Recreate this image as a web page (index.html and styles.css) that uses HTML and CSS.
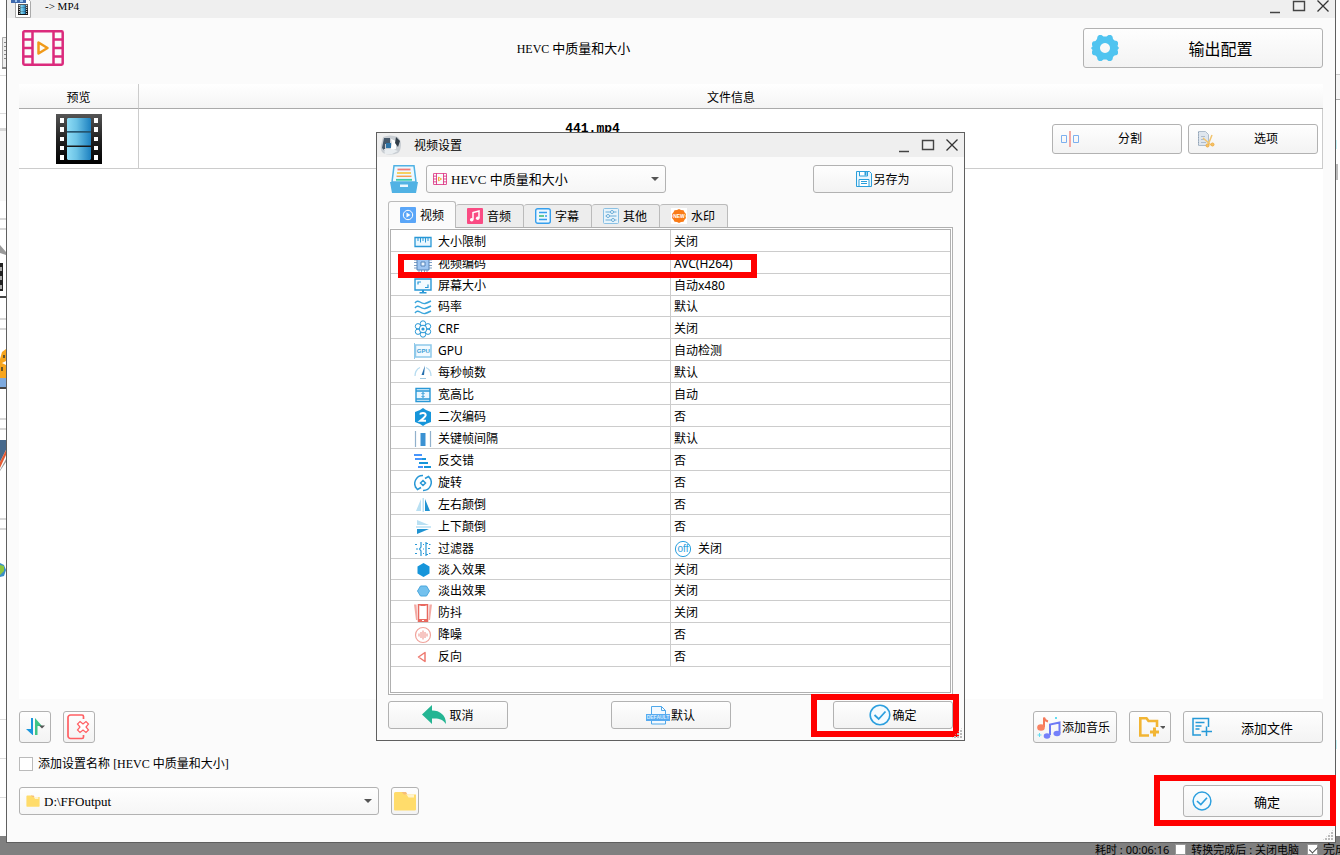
FILE: index.html
```html
<!DOCTYPE html>
<html lang="zh-CN">
<head>
<meta charset="utf-8">
<title>MP4</title>
<link rel="stylesheet" href="styles.css">
</head>
<body>
<svg class="sprite" aria-hidden="true">
  <defs>
    <linearGradient id="gFilm" x1="0" y1="0" x2="0" y2="1"><stop offset="0" stop-color="#555"/><stop offset=".5" stop-color="#222"/><stop offset="1" stop-color="#000"/></linearGradient>
    <linearGradient id="gFrame" x1="0" y1="0" x2="1" y2="0"><stop offset="0" stop-color="#8fdcf5"/><stop offset=".4" stop-color="#6cc3e6"/><stop offset="1" stop-color="#1c80c0"/></linearGradient>
  </defs>
  <symbol id="film" viewBox="0 0 46 50">
    <path fill="url(#gFilm)" d="M0 0h46v50H0z"/>
    <path fill="#fff" d="M4 4h4v5H4zM4 13h4v5H4zM4 23h4v4H4zM4 32h4v4H4zM4 41h4v5H4zM38 4h4v5h-4zM38 13h4v5h-4zM38 23h4v4h-4zM38 32h4v4h-4zM38 41h4v5h-4z"/>
    <path fill="url(#gFrame)" d="M12 4h22l1 1v12H11V5zM11 18.500h24v13H11zM11 33h24v12l-1 1H12l-1-1z"/>
    <path fill="#1d6f9d" opacity=".6" d="M11 17h24v1.500H11z"/>
  </symbol>
  <symbol id="reel" viewBox="0 0 42 36">
    <path fill="none" stroke="#db2a7c" stroke-width="2.500" d="M2.500 1.250h37a1.200 1.200 0 0 1 1.200 1.200v31a1.200 1.200 0 0 1-1.200 1.200h-37a1.200 1.200 0 0 1-1.200-1.200v-31a1.200 1.200 0 0 1 1.200-1.200zM10.500 1v34M31.500 1v34M1 9.500h9.500M1 18h9.500M1 26.500h9.500M31.500 9.500H41M31.500 18H41M31.500 26.500H41"/>
    <path fill="none" stroke="#f09a1a" stroke-width="2.500" stroke-linejoin="round" d="M16.500 12.500v11l9-5.500z"/>
  </symbol>
  <symbol id="gear" viewBox="0 0 28 28">
    <path fill="#50c4f0" fill-rule="evenodd" d="M8 1h2.500l2 1.500h3l2-1.500H20l1.500 1.500.5 2.500 1.500 1.500 2.500.5 1 1.500v2l-.5 1.500L28 14l-1.500 2 .5 1.500v2l-1 1.500-2.500.5L22 23l-.5 2.500L20 27h-2.500l-2-1.500h-3l-2 1.500H8l-1.500-1.500L6 23l-1.500-1.500L2 21l-1-1.500v-2l.5-1.500L0 14l1.500-1.500L1 11V9l1-1.500L4.500 7 6 5l.5-2.500zM14 9a5 5 0 1 0 .01 0z"/>
  </symbol>
  <symbol id="split" viewBox="0 0 18 18"><path fill="none" stroke="#7cb0ef" d="M.5 5.500h5v7h-5zM12.500 5.500h5v7h-5z"/><path fill="#f4a9a4" d="M8 1h2v16H8z"/></symbol>
  <symbol id="cut" viewBox="0 0 18 18"><path fill="#dfe6ee" stroke="#aebccb" d="M1.500 1.500h7l3 3v11h-10z"/><path stroke="#8fa0b3" stroke-dasharray="1 1.500" d="M1.500 2v13"/><path stroke="#afbccb" d="M4 6.500h4M4 9.500h3M4 12.500h5"/><path fill="none" stroke="#f2c46d" stroke-width="1.500" d="M6 8l8 7M15 5l-4 10"/><circle cx="10.500" cy="15.500" r="1.500" fill="#f7c264" stroke="#efae45"/><circle cx="15.500" cy="14.500" r="1.500" fill="#f7c264" stroke="#efae45"/></symbol>
  <symbol id="sort" viewBox="0 0 20 20"><path fill="#1c97dd" d="M6 1h2v17h-.5L1 12h5z"/><path fill="#3fc487" d="M10 1l7 8h-4.500v9H10z"/><path fill="#555" d="M14 8.500h6L17 11.500z"/></symbol>
  <symbol id="clear" viewBox="0 0 24 26"><path fill="none" stroke="#ff5f63" stroke-width="1.700" d="M16.500 5V2.500a1.500 1.500 0 0 0-1.500-1.500H3.500A2.500 2.500 0 0 0 1 3.500V22a2.500 2.500 0 0 0 2.500 2.500H15a1.500 1.500 0 0 0 1.500-1.500v-2"/><path fill="#fff" stroke="#ff5f63" stroke-width="1.200" d="M13 7.500l3 2.500 3-2.500 2.500 2.500-2.500 3 2.500 3-2.500 2.500-3-2.500-3 2.500-2.500-2.500 2.500-3-2.500-3z"/></symbol>
  <symbol id="folder" viewBox="0 0 22 20"><path fill="#ffdc6b" d="M0 2.500Q0 1 1.500 1H9l3 2.500h10V18.500q0 1-1 1H1q-1 0-1-1z"/><path fill="#f7bd78" d="M7.500 1H12l1.500 2.500H10z"/><path fill="#fff3cc" d="M12.500 3.500H20v3h-5.500z"/></symbol>
  <symbol id="music" viewBox="0 0 24 24"><path fill="none" stroke="#f4795a" stroke-width="2" d="M7 12V2.500q.5 3 4 4"/><ellipse cx="4" cy="12.500" rx="3.800" ry="3.200" fill="#f98262"/><path fill="none" stroke="#6d7af5" stroke-width="2" d="M13 20V9.500l9.500-2V18"/><ellipse cx="10" cy="21" rx="3.300" ry="2.800" fill="#7580fa"/><ellipse cx="20" cy="18.500" rx="3.500" ry="2.800" fill="#7580fa"/><path fill="#63dcf1" d="M2 18h1v1.500h1.500v1H3V22H2v-1.500H.5v-1H2zM18 2h2v2h-2z"/></symbol>
  <symbol id="folderadd" viewBox="0 0 26 22"><path fill="none" stroke="#f2b534" stroke-width="2.600" d="M10 19.500H1.300V2.300H7.500l2 2.700H18v6"/><path stroke="#f2b534" stroke-width="3" d="M11 16h9M15.500 11.500v9"/><path fill="#555" d="M21 10h6l-3 3z"/></symbol>
  <symbol id="fileadd" viewBox="0 0 20 20"><path fill="none" stroke="#2599d7" stroke-width="1.500" d="M9 18H1V1.500h15.500V10M14.500 9.500V19M9.500 14.500H20M3.500 5.500h9M3.500 9h6M3.500 12h4"/></symbol>
  <symbol id="ok" viewBox="0 0 22 22"><circle cx="11" cy="11" r="9.800" fill="#f4fbff" stroke="#2c9fde" stroke-width="1.600"/><path fill="none" stroke="#2c9fde" stroke-width="1.800" d="M5.500 11l4.200 4 6.800-7.500"/></symbol>
  <symbol id="undo" viewBox="0 0 26 20"><path fill="#24b593" d="M10 0v5.500c8 0 14 4.500 14 13.500-3-4.500-7-6-14-5.500V19L0 9.500z"/></symbol>
  <symbol id="default" viewBox="0 0 24 20"><path fill="#f2f9ff" stroke="#4fa8ea" d="M5.500 19V1.500h10l4 4V19zM15.500 1.500v4h4"/><path fill="#57aaf0" d="M0 9h24v7H0z"/><text x="12" y="14" text-anchor="middle" class="ico-default" fill="#d8edff">DEFAULT</text></symbol>
  <symbol id="save" viewBox="0 0 16 16"><path fill="#eaf7ff" stroke="#2b9fdb" d="M.5.5h13l2 2v13H.5z"/><path fill="#fff" stroke="#2b9fdb" d="M3.500.5h8v4.500h-8zM3 8.500h10v7H3z"/><path fill="#2b9fdb" d="M8.500 1h2v3.500h-2zM5 10h6v1H5zM5 12h6v1H5z"/></symbol>
  <symbol id="drawer" viewBox="0 0 28 28"><path fill="#edf9ff" stroke="#51b2e4" stroke-width="1.500" d="M4 .8h20L26 17H2z"/><path stroke="#f27c77" stroke-width="1.800" d="M7.500 4.500h13"/><path stroke="#f8c94f" stroke-width="1.800" d="M7 8h14"/><path stroke="#fa9c52" stroke-width="1.500" d="M6.500 11.300h15"/><path stroke="#3ccca8" stroke-width="1.800" d="M6 14.800h16"/><path fill="#51b2e4" d="M0 17h28l-2 11H2z"/><path fill="#e9f7ff" d="M10 19.500h8v2.500h-8z"/></symbol>
  <symbol id="appicon" viewBox="0 0 22 20"><path fill="#c9ced3" d="M3 2q7-3 15 0 3 3 3 8t-3 8q-8 3-15 0-3-3-2-8z"/><path fill="#46596b" d="M4 3h6v6H5v7l-3-3z"/><path fill="#2d74a7" d="M6 8h5v5H6z"/><path fill="#fff" d="M11 4l5 2v8l-6 2 2-7z"/><path fill="#333f4a" d="M16 2l4 4-2 6-3-4z"/><path fill="#e9edf0" d="M4 14h8l6 2-6 3H5z"/></symbol>
  <symbol id="mp4icon" viewBox="0 0 22 24"><path fill="#fff" stroke="#aaa" d="M5.500 4.500h12l3 3v16h-15z"/><path fill="#3e69ad" d="M1 1h15v8H1z"/><path fill="#98c1ed" d="M5 3h2v5H5zM10 3h3v5h-3z"/></symbol>

  <symbol id="t-video" viewBox="0 0 16 16"><path fill="#5aa6f8" d="M0 1a1 1 0 0 1 1-1h14a1 1 0 0 1 1 1v14a1 1 0 0 1-1 1H1a1 1 0 0 1-1-1z"/><circle cx="8" cy="8" r="4.700" fill="none" stroke="#fff"/><path fill="#fff" d="M6.500 5.500v5l4-2.500z"/></symbol>
  <symbol id="t-audio" viewBox="0 0 16 16"><rect width="16" height="16" rx="1" fill="#fa4b83"/><path fill="none" stroke="#fff" stroke-width="1.500" d="M6 11.500V4.500l6-1.500v7"/><circle cx="4.700" cy="11.700" r="1.800" fill="#fff"/><circle cx="10.700" cy="10.300" r="1.800" fill="#fff"/></symbol>
  <symbol id="t-sub" viewBox="0 0 16 16"><rect x=".7" y=".7" width="14.600" height="14.600" rx="2" fill="#eef8ff" stroke="#369fed" stroke-width="1.400"/><path stroke="#369fed" stroke-width="1.300" d="M4 4.500h8M4 11.500h8"/><path stroke="#47c384" stroke-width="1.700" d="M4 8h5"/><path stroke="#369fed" stroke-width="1.300" d="M10 8h2"/></symbol>
  <symbol id="t-other" viewBox="0 0 16 16"><rect x=".5" y=".5" width="15" height="15" rx="1" fill="#e8f4fb" stroke="#8bc1e4"/><path stroke="#68acd8" d="M2.500 4h11M2.500 8h11M2.500 12h11"/><circle cx="9" cy="4" r="1.500" fill="#fff" stroke="#68acd8"/><circle cx="5" cy="8" r="1.500" fill="#fff" stroke="#68acd8"/><circle cx="10" cy="12" r="1.500" fill="#fff" stroke="#68acd8"/></symbol>
  <symbol id="t-mark" viewBox="0 0 16 16"><path fill="#fff" d="M0 0h16v16H0z"/><path fill="#fa7b17" d="M8 1l2 1 2.500.3 1 2 1.500 1.700-.5 2 .5 2-1.500 1.700-1 2-2.500.3-2 1-2-1-2.500-.3-1-2L1 10l.5-2L1 6l1.500-1.700 1-2L6 2z"/><text x="8" y="9.500" text-anchor="middle" class="ico-new" fill="#fff">NEW</text></symbol>

  <symbol id="r-ruler" viewBox="0 0 18 18"><path fill="#e9f7ff" stroke="#2998d6" stroke-width="1.300" d="M1 4.500h16v9H1z"/><path stroke="#2998d6" d="M4 5v3M6.500 5v4.500M9 5v3M11.500 5v4.500M14 5v3"/></symbol>
  <symbol id="r-chip" viewBox="0 0 18 18"><path stroke="#7f9fc4" d="M5 0v18M7.500 0v18M10.500 0v18M13 0v18M0 5h18M0 7.500h18M0 10.500h18M0 13h18"/><path fill="#9fc6f2" stroke="#5684b8" d="M3 3h12v12H3z"/><path fill="#e9f4ff" stroke="#5684b8" d="M7 7h4v4H7z"/></symbol>
  <symbol id="r-screen" viewBox="0 0 18 18"><path fill="#f4fbff" stroke="#2998d6" stroke-width="1.400" d="M1 2h16v11H1z"/><path fill="none" stroke="#2998d6" stroke-width="1.200" d="M4 7.500V5h3M14 7.500v3h-3"/><path fill="#2998d6" d="M8 13h2v2h2.500v1.500h-7V15H8z"/></symbol>
  <symbol id="r-wave" viewBox="0 0 18 18"><path fill="none" stroke="#3ba6dc" stroke-width="1.400" d="M1 5q2-3 5-1t5 1.500T17 3M1 10q2-3 5-1t5 1.500T17 8M1 15q2-3 5-1t5 1.500T17 13"/></symbol>
  <symbol id="r-atom" viewBox="0 0 18 18"><g fill="none" stroke="#2998d6"><circle cx="9" cy="3.500" r="2.700"/><circle cx="9" cy="14.500" r="2.700"/><circle cx="4" cy="6.300" r="2.700"/><circle cx="14" cy="6.300" r="2.700"/><circle cx="4" cy="11.700" r="2.700"/><circle cx="14" cy="11.700" r="2.700"/><circle cx="9" cy="9" r="3.800" fill="#fff"/></g><circle cx="9" cy="9" r="1.600" fill="#2998d6"/></symbol>
  <symbol id="r-gpu" viewBox="0 0 18 18"><path stroke="#8fc9ea" d="M.5 1v16"/><path fill="#f2faff" stroke="#8fc9ea" stroke-width="1.500" d="M1.500 3h15.500v12H1.500z"/><text x="9.300" y="11" text-anchor="middle" class="ico-gpu" fill="#3a9dd5">GPU</text></symbol>
  <symbol id="r-fps" viewBox="0 0 18 18"><path fill="none" stroke="#b7dcf0" stroke-width="1.300" d="M1 12q0-6 5-8.500M12 3.500q5 2 5 8.500"/><path fill="#256fae" d="M11 1.500l-1 9.500H7.500z"/><path stroke="#9fc8e1" d="M6 14.500h6"/></symbol>
  <symbol id="r-ratio" viewBox="0 0 18 18"><path fill="#eaf7ff" stroke="#2998d6" stroke-width="1.400" d="M2 2.500h14v13H2zM2 5h14M2 13h14"/><path stroke="#2998d6" d="M9 6.500v5M7.500 8L9 6.500 10.500 8M7.500 10L9 11.500l1.500-1.500" fill="none"/></symbol>
  <symbol id="r-two" viewBox="0 0 18 18"><path fill="#1695da" d="M9 0l3 2 5 2v10l-5 2-3 2-3-2-5-2V4l5-2z"/><path fill="none" stroke="#fff" stroke-width="2" d="M6 6.500Q6.500 5 9 5t2.700 2Q11.700 8.500 6.300 12.800H12"/></symbol>
  <symbol id="r-key" viewBox="0 0 18 18"><path fill="#3b91d2" d="M6.500 3h5v13h-5z"/><path stroke="#91b1cc" stroke-width="1.200" d="M1.500 1v16M16.500 1v16"/></symbol>
  <symbol id="r-inter" viewBox="0 0 18 18"><path fill="#4795fc" d="M0 2h8v2H0zM1 6h7v2H1zM4 14h5v2H4z"/><path fill="#1695da" d="M8 6h4v2H8zM5 10h9v2H5zM10 14h7v2h-7z"/></symbol>
  <symbol id="r-rot" viewBox="0 0 18 18"><path fill="none" stroke="#2998d6" stroke-width="1.500" d="M3 15A8 8 0 0 1 9 1.500M15 3a8 8 0 0 1-6 13.500M1 12.500l2.500 3 3.500-2M17 5.500l-2.500-3-3.500 2"/><path fill="none" stroke="#2998d6" stroke-width="1.500" d="M9 6.500L11.500 9 9 11.500 6.500 9z"/></symbol>
  <symbol id="r-fliph" viewBox="0 0 18 18"><path fill="#b9e0f3" d="M7 3v12H2zM8.500 2h1.500v14H8.500z"/><path fill="#1f93d2" d="M11 3v12h5z"/></symbol>
  <symbol id="r-flipv" viewBox="0 0 18 18"><path fill="#b9e0f3" d="M3 2v5h12zM2 8.300h15v1.400H2z"/><path fill="#1f93d2" d="M3 16v-5h12z"/></symbol>
  <symbol id="r-filter" viewBox="0 0 18 18"><path fill="none" stroke="#2998d6" stroke-width="1.200" d="M7 2v5L5.500 9 7 11v5M12 2v14M12 3.500h2M12 14.500h2"/><path fill="#2998d6" d="M1 4h2v1H1zM2 8.500h2v1H2zM1 13h2v1H1zM9 4h1v1H9zM9 8.500h1v1H9zM9 13h1v1H9zM14 8h2v1h-2zM15 4h1.500v1H15zM15 13h1.500v1H15z"/></symbol>
  <symbol id="r-in" viewBox="0 0 18 18"><path fill="#1695da" d="M9.500 2l6 3.500v7l-6 3.500-6-3.500v-7z"/></symbol>
  <symbol id="r-out" viewBox="0 0 18 18"><path fill="#73c1ee" stroke="#4ba7dc" d="M6.500 4h6l3 5-3 5h-6l-3-5z"/></symbol>
  <symbol id="r-shake" viewBox="0 0 18 18"><path fill="#fff" stroke="#e8695f" stroke-width="1.500" d="M4.500.8h9v16.500h-9z"/><path fill="#e8695f" d="M4 15h10v3H4zM6.500 0h5v2h-5z"/><path fill="#f3a9a3" d="M0 .5h2.500L3.500 16H2zM18 .5h-2.500l-1 15.500H16z"/><path fill="#fff" d="M8 16h2v1H8z"/></symbol>
  <symbol id="r-noise" viewBox="0 0 18 18"><circle cx="9" cy="9" r="7.500" fill="#fff" stroke="#f0a39b" stroke-width="1.200"/><path stroke="#ee8c84" d="M5 7.500v3M7 6v6M9 4.500v9M11 6v6M13 7.500v3"/></symbol>
  <symbol id="r-rev" viewBox="0 0 18 18"><path fill="#fff" stroke="#ee7a70" stroke-width="1.500" stroke-linejoin="round" d="M11 4.500v9L4.500 9z"/></symbol>
  <symbol id="r-off" viewBox="0 0 18 18"><circle cx="9" cy="9" r="7.600" fill="#fff" stroke="#2ba0de"/><text x="9" y="12" text-anchor="middle" class="ico-off" fill="#2ba0de">off</text></symbol>
  <symbol id="w-min" viewBox="0 0 24 24"><path stroke="#444" stroke-width="1.500" d="M7 18.500h10"/></symbol>
  <symbol id="w-max" viewBox="0 0 24 24"><path fill="none" stroke="#444" stroke-width="1.400" d="M6.500 7.500h11v9h-11z"/></symbol>
  <symbol id="w-close" viewBox="0 0 24 24"><path stroke="#333" stroke-width="1.300" d="M6.500 6.500l11 11M17.500 6.500l-11 11"/></symbol>
</svg>

<div class="backdrop">
  <div class="backdrop-body">
    <svg class="edge" viewBox="0 0 6 836" preserveAspectRatio="xMinYMin slice" aria-hidden="true">
      <path fill="#f7f7f7" d="M0 131h6v70H0z"/>
      <path fill="#ddd" d="M0 75h6v1H0zM0 113h6v1H0zM0 719h6v1H0zM0 758h6v1H0zM0 797h6v1H0z"/>
      <path fill="#d8d8d8" d="M0 128h6v3H0zM0 218h6v2H0zM0 228h6v2H0zM0 318h6v2H0zM0 328h6v2H0zM0 418h6v2H0zM0 428h6v2H0zM0 518h6v2H0zM0 528h6v2H0z"/>
      <path fill="#eee" stroke="#aaa" d="M2.500 37.500H7v30H2.500z"/><path fill="#888" d="M2 67h4v2H2zM4 42h2v1H4zM4 46h2v1H4zM4 50h2v1H4zM4 54h2v1H4zM4 58h2v1H4z"/>
      <path fill="#999" d="M0 245l6 7v3l-6-2z"/>
      <path fill="#222" d="M0 263h3v28H0z"/><path fill="#aaa" d="M0 267h2v4H0zM0 276h2v4H0zM0 285h2v4H0z"/>
      <path fill="#444" d="M0 296h6v2H0zM0 387h6v2H0z"/>
      <path fill="#f7a51d" d="M2 352l4-3v12l-6 3v-5zM0 362l6 3v13H0z"/><path fill="#6b5526" d="M3 355h2v3H3zM1 367h2v4H1z"/>
      <path fill="#7da9dd" d="M0 378h6v9H0z"/>
      <path fill="#47698c" d="M0 440h6v10l-6 12z"/><path fill="#e45a33" d="M0 462l6-12v5l-6 13z"/><path fill="#999" d="M0 470l6-11v3l-6 9z"/>
      <path fill="#3a8fc6" d="M0 563l4 2 2 5-2 6-4 1z"/><path fill="#8cc63f" d="M0 565l4 1v5l-4 4z"/>
    </svg>
    <svg class="edge edge-right" viewBox="0 0 6 836" preserveAspectRatio="xMinYMin slice" aria-hidden="true">
      <path fill="#f6f6f6" d="M0 75h6v24H0z"/><path fill="#ccc" d="M0 74h6v1H0z"/><path fill="#aaa" d="M0 99h6v1H0z"/>
      <path fill="#c8f6fa" d="M0 140h1v9H0zM0 740h1v9H0z"/><path fill="#bbb" d="M0 164h2v16H0z"/>
    </svg>
  </div>
  <div class="status">
    <span class="elapsed">耗时 : 00:06:16</span>
    <label><input type="checkbox" class="tick"> 转换完成后 : 关闭电脑</label>
    <label><input type="checkbox" class="tick" checked> 完成</label>
  </div>
</div>

<main class="window main-window">
  <header class="titlebar">
    <span class="mp4-icon"><svg class="i-mp4"><use href="#mp4icon"/></svg><svg class="i-mini"><use href="#film"/></svg></span>
    <h1 class="main-title">-&gt; MP4</h1>
    <div class="controls">
      <button aria-label="最小化"><svg><use href="#w-min"/></svg></button>
      <button aria-label="最大化"><svg><use href="#w-max"/></svg></button>
      <button aria-label="关闭"><svg><use href="#w-close"/></svg></button>
    </div>
  </header>
  <div class="main-body">
    <div class="profile">
      <svg class="i-reel"><use href="#reel"/></svg>
      <p class="profile-name"><span class="latin">HEVC </span>中质量和大小</p>
      <button class="btn wide-config"><svg class="i28"><use href="#gear"/></svg><span class="fill">输出配置</span></button>
    </div>
    <div class="files">
      <table class="file-table">
        <thead><tr><th class="col-preview">预览</th><th>文件信息</th></tr></thead>
        <tbody><tr>
          <td class="col-preview"><svg class="i-film"><use href="#film"/></svg></td>
          <td class="col-info"><div class="info">
            <strong class="file-name">441.mp4</strong>
            <button class="btn w130"><svg class="i18"><use href="#split"/></svg><span class="fill">分割</span></button>
            <button class="btn w130"><svg class="i18"><use href="#cut"/></svg><span class="fill">选项</span></button>
          </div></td>
        </tr></tbody>
      </table>
    </div>
    <div class="tools">
      <button class="btn square" aria-label="排序"><svg class="i20"><use href="#sort"/></svg></button>
      <button class="btn square" aria-label="清空"><svg class="i-clear"><use href="#clear"/></svg></button>
      <button class="btn add-music push"><svg class="i24"><use href="#music"/></svg><span>添加音乐</span></button>
      <button class="btn add-folder" aria-label="添加文件夹"><svg class="i-fadd"><use href="#folderadd"/></svg></button>
      <button class="btn w140"><svg class="i20"><use href="#fileadd"/></svg><span class="fill t13">添加文件</span></button>
    </div>
    <label class="name-row"><input type="checkbox" class="tick big"><span>添加设置名称 <span class="latin">[HEVC </span>中质量和大小<span class="latin">]</span></span></label>
    <div class="output">
      <div class="combo path">
        <svg class="combo-icon"><use href="#folder"/></svg>
        <select aria-label="输出文件夹"><option>D:\FFOutput</option></select>
      </div>
      <button class="btn browse" aria-label="浏览"><svg class="i-folder"><use href="#folder"/></svg></button>
      <div class="marked push">
        <button class="btn w140"><svg class="i20"><use href="#ok"/></svg><span class="fill t13">确定</span></button>
        <span class="mark mark-main"></span>
      </div>
    </div>
  </div>
  <span class="grip"></span>
</main>

<section class="window dialog" role="dialog" aria-labelledby="dlg-title">
  <header class="titlebar">
    <svg class="i-app"><use href="#appicon"/></svg>
    <h2 id="dlg-title" class="dialog-title">视频设置</h2>
    <div class="controls">
      <button aria-label="最小化"><svg><use href="#w-min"/></svg></button>
      <button aria-label="最大化"><svg><use href="#w-max"/></svg></button>
      <button aria-label="关闭"><svg><use href="#w-close"/></svg></button>
    </div>
  </header>
  <div class="dialog-body">
    <div class="preset">
      <svg class="i28"><use href="#drawer"/></svg>
      <div class="combo preset-combo">
        <svg class="combo-icon"><use href="#reel"/></svg>
        <select aria-label="预设"><option>HEVC 中质量和大小</option></select>
      </div>
      <button class="btn w140 short-btn center push"><svg class="i16"><use href="#save"/></svg><span>另存为</span></button>
    </div>
    <div class="tabs" role="tablist">
      <button class="tab active" role="tab" aria-selected="true"><svg class="i16"><use href="#t-video"/></svg><span>视频</span></button>
      <button class="tab" role="tab"><svg class="i16"><use href="#t-audio"/></svg><span>音频</span></button>
      <button class="tab" role="tab"><svg class="i16"><use href="#t-sub"/></svg><span>字幕</span></button>
      <button class="tab" role="tab"><svg class="i16"><use href="#t-other"/></svg><span>其他</span></button>
      <button class="tab" role="tab"><svg class="i16"><use href="#t-mark"/></svg><span>水印</span></button>
    </div>
    <div class="panel"><div class="sheet">
      <table class="settings">
        <tbody>
          <tr><th><div class="cell"><svg><use href="#r-ruler"/></svg>大小限制</div></th><td>关闭</td></tr>
          <tr><th><div class="cell"><svg><use href="#r-chip"/></svg>视频编码</div></th><td>AVC(H264)</td></tr>
          <tr><th><div class="cell"><svg><use href="#r-screen"/></svg>屏幕大小</div></th><td>自动x480</td></tr>
          <tr class="low"><th><div class="cell"><svg><use href="#r-wave"/></svg>码率</div></th><td>默认</td></tr>
          <tr><th><div class="cell"><svg><use href="#r-atom"/></svg>CRF</div></th><td>关闭</td></tr>
          <tr><th><div class="cell"><svg><use href="#r-gpu"/></svg>GPU</div></th><td>自动检测</td></tr>
          <tr><th><div class="cell"><svg><use href="#r-fps"/></svg>每秒帧数</div></th><td>默认</td></tr>
          <tr><th><div class="cell"><svg><use href="#r-ratio"/></svg>宽高比</div></th><td>自动</td></tr>
          <tr><th><div class="cell"><svg><use href="#r-two"/></svg>二次编码</div></th><td>否</td></tr>
          <tr><th><div class="cell"><svg><use href="#r-key"/></svg>关键帧间隔</div></th><td>默认</td></tr>
          <tr><th><div class="cell"><svg><use href="#r-inter"/></svg>反交错</div></th><td>否</td></tr>
          <tr><th><div class="cell"><svg><use href="#r-rot"/></svg>旋转</div></th><td>否</td></tr>
          <tr><th><div class="cell"><svg><use href="#r-fliph"/></svg>左右颠倒</div></th><td>否</td></tr>
          <tr><th><div class="cell"><svg><use href="#r-flipv"/></svg>上下颠倒</div></th><td>否</td></tr>
          <tr><th><div class="cell"><svg><use href="#r-filter"/></svg>过滤器</div></th><td><div class="cell"><svg><use href="#r-off"/></svg>关闭</div></td></tr>
          <tr class="low"><th><div class="cell"><svg><use href="#r-in"/></svg>淡入效果</div></th><td>关闭</td></tr>
          <tr class="low"><th><div class="cell"><svg><use href="#r-out"/></svg>淡出效果</div></th><td>关闭</td></tr>
          <tr><th><div class="cell"><svg><use href="#r-shake"/></svg>防抖</div></th><td>关闭</td></tr>
          <tr><th><div class="cell"><svg><use href="#r-noise"/></svg>降噪</div></th><td>否</td></tr>
          <tr><th><div class="cell"><svg><use href="#r-rev"/></svg>反向</div></th><td>否</td></tr>
        </tbody>
      </table>
      <span class="mark mark-row"></span>
    </div></div>
    <div class="actions">
      <button class="btn w120 center"><svg class="i-undo"><use href="#undo"/></svg><span>取消</span></button>
      <button class="btn w120 center"><svg class="i-default"><use href="#default"/></svg><span>默认</span></button>
      <div class="marked">
        <button class="btn w120 center"><svg class="i22"><use href="#ok"/></svg><span>确定</span></button>
        <span class="mark mark-dialog"></span>
      </div>
    </div>
  </div>
  <span class="grip"></span>
</section>
</body>
</html>
```
FILE: styles.css
```css
* { box-sizing: border-box; }

html, body { height: 100%; }

body {
  margin: 0;
  position: relative;
  overflow: hidden;
  background: #fff;
  color: #000;
  font: 12px/16px "Noto Sans", "Noto Sans CJK SC", sans-serif;
}

h1, h2, p { margin: 0; font-size: 12px; font-weight: 400; }
button, select, input { font: inherit; color: inherit; margin: 0; }
svg { display: block; flex: none; overflow: visible; }
.sprite { position: absolute; width: 0; height: 0; overflow: hidden; }

.ico-new { font: bold 5px "Liberation Sans", sans-serif; }
.ico-default { font: bold 5px "Liberation Sans", sans-serif; }
.ico-gpu { font: bold 6px "Liberation Sans", sans-serif; }
.ico-off { font: 10px "Liberation Sans", sans-serif; }

/* Application behind the windows */
.backdrop {
  position: absolute;
  inset: 0 -7px -7px 0;
  display: flex;
  flex-direction: column;
}
.backdrop-body {
  flex: 1;
  min-height: 0;
  overflow: hidden;
  display: flex;
  justify-content: space-between;
  padding-right: 5px;
}
.edge { width: 6px; height: 836px; }
.status {
  height: 26px;
  padding-top: 1px;
  background: #808080;
  display: flex;
  align-items: center;
  justify-content: flex-end;
  gap: 6px;
  font-size: 11px;
  white-space: nowrap;
}
.status label { display: flex; align-items: center; gap: 5px; }
.status label:last-child { margin-left: 2px; font-size: 12px; }

.tick {
  appearance: none;
  width: 11px;
  height: 11px;
  background: #fff;
  border: 1px solid #999;
  flex: none;
}
.tick.big { width: 14px; height: 14px; border-color: #bbb; }
.tick:checked::after {
  content: "";
  display: block;
  width: 4px;
  height: 7px;
  margin: 0 3px;
  border: solid #444;
  border-width: 0 1px 1px 0;
  transform: rotate(45deg);
}

/* Windows */
.window {
  position: absolute;
  background: #fbfbfb;
  border: 1px solid #5f5f5f;
  display: flex;
  flex-direction: column;
}
.main-window { inset: -7px 4px 12px 6px; }
.dialog { top: 132px; left: calc(50% - 294px); width: 589px; }

.titlebar {
  height: 24px;
  flex: none;
  background: #efefef;
  display: flex;
  align-items: center;
}
.controls { margin-left: auto; display: flex; }
.controls button { width: 24px; height: 24px; padding: 0; border: 0; background: none; }
.controls svg { width: 24px; height: 24px; }
.mp4-icon { position: relative; margin-left: 3px; margin-right: 13px; }
.i-mp4 { width: 22px; height: 24px; }
.i-mini { position: absolute; left: 8px; top: 10px; width: 10px; height: 11px; }
.main-title { font: 11px/16px "Liberation Serif", serif; }
.dialog-title { padding-top: 1px; }
.i-app { width: 22px; height: 20px; margin: 0 12px 0 3px; }

.grip {
  position: absolute;
  right: 1px;
  bottom: 1px;
  width: 12px;
  height: 12px;
  background: radial-gradient(circle at 1px 1px, #bbb 1px, transparent 1px) 0 0 / 3px 3px;
  clip-path: polygon(100% 0, 100% 100%, 0 100%);
}

/* Buttons */
.btn {
  height: 28px;
  padding: 0;
  border: 1px solid #b2b2b2;
  border-radius: 3px;
  background: linear-gradient(#fefefe, #f3f3f3);
  display: flex;
  align-items: center;
  white-space: nowrap;
  flex: none;
}
.btn span, .tab span { padding-top: 1px; }
.fill { flex: 1; text-align: center; }
.push { margin-left: auto; }
.w120 { width: 120px; }
.w130 { width: 130px; height: 30px; padding-left: 8px; }
.w140 { width: 140px; height: 32px; padding-left: 8px; }
.short-btn { height: 28px; padding: 0; }
.center { justify-content: center; gap: 1px; }
.square { width: 32px; height: 32px; justify-content: center; }
.wide-config { width: 240px; height: 40px; padding-left: 7px; font-size: 16px; }
.add-music { width: 84px; height: 32px; padding-left: 3px; gap: 1px; }
.add-folder { width: 42px; height: 32px; padding-left: 9px; }
.browse { width: 28px; justify-content: center; }
.t13 { font-size: 13px; }

.i16 { width: 16px; height: 16px; }
.i18 { width: 18px; height: 18px; }
.i20 { width: 20px; height: 20px; }
.i22 { width: 22px; height: 22px; }
.i24 { width: 24px; height: 24px; }
.i28 { width: 28px; height: 28px; }
.i-reel { width: 42px; height: 36px; }
.i-film { width: 46px; height: 50px; margin: 0 auto; }
.i-clear { width: 24px; height: 26px; }
.i-fadd { width: 26px; height: 22px; }
.i-folder { width: 22px; height: 20px; }
.i-undo { width: 26px; height: 20px; }
.i-default { width: 24px; height: 20px; }

/* Main window content */
.main-body {
  flex: 1;
  min-height: 0;
  padding: 0 12px 25px;
  display: flex;
  flex-direction: column;
}
.profile {
  flex: none;
  display: flex;
  align-items: center;
  padding: 10px 0 16px 3px;
}
.profile-name { flex: 1; text-align: center; font-size: 13px; }
.latin { font: 12px "Liberation Serif", serif; white-space: pre; }

.files { flex: 1; min-height: 0; background: #fff; }
.file-table { width: 100%; border-collapse: separate; border-spacing: 0; table-layout: fixed; }
.file-table th {
  height: 25px;
  padding: 3px 0 0;
  font-weight: 400;
  background: linear-gradient(#fff, #f4f4f4);
  border-bottom: 1px solid #aaa;
}
.file-table td { height: 60px; padding: 0; border-bottom: 1px solid #ccc; }
.file-table .col-preview { width: 120px; border-right: 1px solid #ccc; }
.file-table .col-info { border-right: 1px solid #ccc; }
.info { display: flex; align-items: center; gap: 6px; padding-right: 4px; height: 59px; }
.file-name {
  flex: 1;
  align-self: flex-start;
  padding-top: 11px;
  text-align: center;
  font: bold 13px/18px "Liberation Mono", monospace;
}

.tools { flex: none; display: flex; gap: 12px; padding-top: 12px; }
.name-row { flex: none; height: 42px; display: flex; align-items: center; align-self: flex-start; gap: 5px; }
.output { flex: none; display: flex; align-items: center; gap: 12px; }

.combo { position: relative; }
.combo-icon { position: absolute; left: 7px; top: 8px; width: 14px; height: 12px; pointer-events: none; }
.combo select {
  appearance: none;
  width: 100%;
  height: 28px;
  padding: 0 24px;
  border: 1px solid #b2b2b2;
  border-radius: 3px;
  background: linear-gradient(#fefefe, #f6f6f6);
  font: 13px "Liberation Serif", "Noto Sans CJK SC", serif;
}
.combo::after {
  content: "";
  position: absolute;
  right: 7px;
  top: 12px;
  border: 4px solid transparent;
  border-top-color: #555;
  pointer-events: none;
}
.path { width: 360px; }
.preset-combo { width: 240px; }

/* Red highlight frames */
.marked { position: relative; }
.mark { position: absolute; border: 6px solid #f00; pointer-events: none; }
.mark-main { inset: -10px -13px -9px -29px; }
.mark-dialog { inset: -7px -6px -8px -22px; }
.mark-row { left: 7px; top: 24px; width: 359px; height: 24px; }

/* Dialog content */
.dialog-body { padding: 8px 11px 11px; }
.preset { display: flex; align-items: center; gap: 8px; padding-left: 2px; }
.tabs { display: flex; align-items: flex-end; height: 26px; margin-top: 8px; }
.tab {
  width: 68px;
  height: 23px;
  padding: 0 0 0 11px;
  display: flex;
  align-items: center;
  gap: 4px;
  border: 1px solid #bbb;
  border-left-width: 0;
  border-bottom: 0;
  border-radius: 3px 3px 0 0;
  background: #ededed;
}
.tab.active {
  position: relative;
  z-index: 1;
  height: 27px;
  margin-bottom: -1px;
  border-left-width: 1px;
  background: #fbfbfb;
}
.panel { border: 1px solid #b0b0b0; padding: 1px; background: #fff; }
.sheet { position: relative; border: 1px solid #b0b0b0; padding-bottom: 25px; }
.settings { width: 100%; border-collapse: separate; border-spacing: 0; table-layout: fixed; }
.settings th, .settings td {
  height: 22px;
  padding: 2px 0 0 3px;
  border-bottom: 1px solid #ccc;
  text-align: left;
  font-weight: 400;
}
.settings th { width: 280px; padding-left: 23px; border-right: 1px solid #ccc; }
.settings .low th, .settings .low td { height: 21px; }
.cell { display: flex; align-items: center; gap: 6px; }
.cell svg { width: 18px; height: 18px; }
.actions { display: flex; justify-content: space-between; margin-top: 6px; }
```
